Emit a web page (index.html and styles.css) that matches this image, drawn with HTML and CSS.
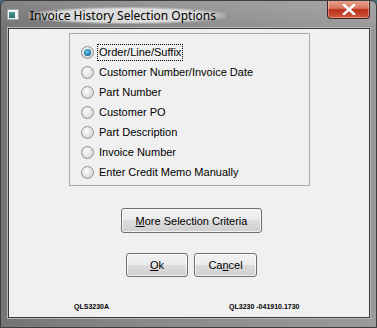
FILE: index.html
```html
<!DOCTYPE html>
<html>
<head>
  <title>Invoice History Selection Options</title>
  <link rel="stylesheet" href="styles.css">
</head>
<body>
  <div class="window">
    <!-- Title bar -->
    <div class="titlebar">
      <span class="app-icon"><span class="app-icon-inner"></span></span>
      <span class="title">Invoice History Selection Options</span>
      <button class="close-btn" type="button">
        <svg width="14" height="11" viewBox="0 0 14 11">
          <path d="M2 1 L12 10 M12 1 L2 10" stroke="#fff" stroke-width="2.6" stroke-linecap="square"/>
        </svg>
      </button>
    </div>

    <!-- Client area -->
    <div class="client">
      <div class="group">
        <label class="option"><span class="radio checked"></span><span class="label focused">Order/Line/Suffix</span></label>
        <label class="option"><span class="radio"></span><span class="label">Customer Number/Invoice Date</span></label>
        <label class="option"><span class="radio"></span><span class="label">Part Number</span></label>
        <label class="option"><span class="radio"></span><span class="label">Customer PO</span></label>
        <label class="option"><span class="radio"></span><span class="label">Part Description</span></label>
        <label class="option"><span class="radio"></span><span class="label">Invoice Number</span></label>
        <label class="option"><span class="radio"></span><span class="label">Enter Credit Memo Manually</span></label>
      </div>

      <div class="btn-row more-row">
        <button class="btn btn-more" type="button"><u>M</u>ore Selection Criteria</button>
      </div>

      <div class="btn-row ok-row">
        <button class="btn btn-ok" type="button"><u>O</u>k</button>
        <button class="btn btn-cancel" type="button">Ca<u>n</u>cel</button>
      </div>

      <div class="footer">
        <span class="code code-left">QLS3230A</span>
        <span class="code code-right">QL3230 -041910.1730</span>
      </div>
    </div>
  </div>
</body>
</html>
```

FILE: styles.css
```css
/* Window frame */
body {
  margin: 0;
  background-color: #3f6f78;
  font-family: "Liberation Sans", Arial, sans-serif;
}
.window {
  width: 377px;
  height: 328px;
  box-sizing: border-box;
  background: linear-gradient(to right, #747474 0%, #8a8a8a 40%, #9a9a9a 100%);
  border: 1px solid #3d3d3d;
  border-radius: 6px 6px 0 0;
  display: flex;
  flex-direction: column;
  overflow: hidden;
}
.titlebar {
  height: 27px;
  display: flex;
  align-items: flex-start;
  position: relative;
  background: linear-gradient(to bottom, rgba(255,255,255,0.12), rgba(255,255,255,0));
}
.app-icon {
  width: 12px;
  height: 11px;
  margin: 8px 0 0 6px;
  background-color: #f4f4f4;
  border: 1px solid #9aa;
  box-sizing: border-box;
  display: flex;
  align-items: center;
  padding-left: 1px;
}
.app-icon-inner {
  width: 6px;
  height: 6px;
  background: linear-gradient(#4a9a94, #2c6e6a);
}
.title {
  margin: 6px 0 0 9px;
  font-family: "Noto Sans", "DejaVu Sans", sans-serif;
  font-size: 12px;
  color: #000;
  padding: 0 10px 0 2px;
  background: radial-gradient(ellipse at center, rgba(235,235,235,0.85) 55%, rgba(235,235,235,0) 75%);
}
.close-btn {
  position: absolute;
  top: -1px;
  right: 6px;
  width: 43px;
  height: 19px;
  border: 1px solid #4a2220;
  border-top: none;
  border-radius: 0 0 4px 4px;
  background: linear-gradient(to bottom, #e8a796 0%, #d7775f 45%, #b8301a 55%, #cf5a3c 100%);
  box-shadow: inset 0 0 0 1px rgba(255,255,255,0.35);
  padding: 0;
  display: flex;
  align-items: center;
  justify-content: center;
}

/* Client area */
.client {
  margin: 0 6px 9px 7px;
  flex: 1;
  background-color: #f0f0f0;
  border: 1px solid #3c3c3c;
  box-shadow: 0 0 0 1px #b8b8b8;
  display: flex;
  flex-direction: column;
}
.group {
  margin: 4px 0 0 60px;
  width: 241px;
  height: 153px;
  box-sizing: border-box;
  border: 1px solid #a9a9a9;
  padding: 8px 0 0 11px;
  display: flex;
  flex-direction: column;
}
.option {
  height: 20px;
  display: flex;
  align-items: center;
  font-size: 11px;
  color: #000;
}
.radio {
  width: 13px;
  height: 13px;
  box-sizing: border-box;
  border-radius: 50%;
  border: 1px solid #8f8f8f;
  background: radial-gradient(circle at 40% 35%, #fdfdfd 0%, #e4e4e4 50%, #c9c9c9 100%);
  margin-right: 3px;
  display: flex;
  align-items: center;
  justify-content: center;
}
.radio.checked::after {
  content: "";
  width: 7px;
  height: 7px;
  border-radius: 50%;
  background: radial-gradient(circle at 45% 40%, #7fd3ef 0%, #2a8dbb 45%, #0e4d6e 100%);
}
.label {
  padding: 1px 1px 2px;
  border: 1px dotted transparent;
}
.label.focused {
  border-color: #000;
}

/* Buttons */
.btn-row {
  display: flex;
  gap: 6px;
}
.more-row {
  margin: 22px 0 0 112px;
}
.ok-row {
  margin: 20px 0 0 117px;
}
.btn {
  font-family: "Liberation Sans", Arial, sans-serif;
  font-size: 11px;
  color: #000;
  border: 1px solid #707070;
  border-radius: 3px;
  background: linear-gradient(to bottom, #f2f2f2 0%, #ebebeb 49%, #dddddd 50%, #cfcfcf 100%);
  box-shadow: inset 0 0 0 1px rgba(255,255,255,0.7);
  padding: 0;
}
.btn-more {
  width: 141px;
  height: 25px;
}
.btn-ok {
  width: 62px;
  height: 24px;
}
.btn-cancel {
  width: 63px;
  height: 24px;
}

/* Footer program codes */
.footer {
  margin-top: 26px;
  display: flex;
  font-family: "Liberation Sans", Arial, sans-serif;
  font-size: 7px;
  font-weight: bold;
  color: #000;
}
.code-left {
  margin-left: 65px;
}
.code-right {
  margin-left: 120px;
}
```
